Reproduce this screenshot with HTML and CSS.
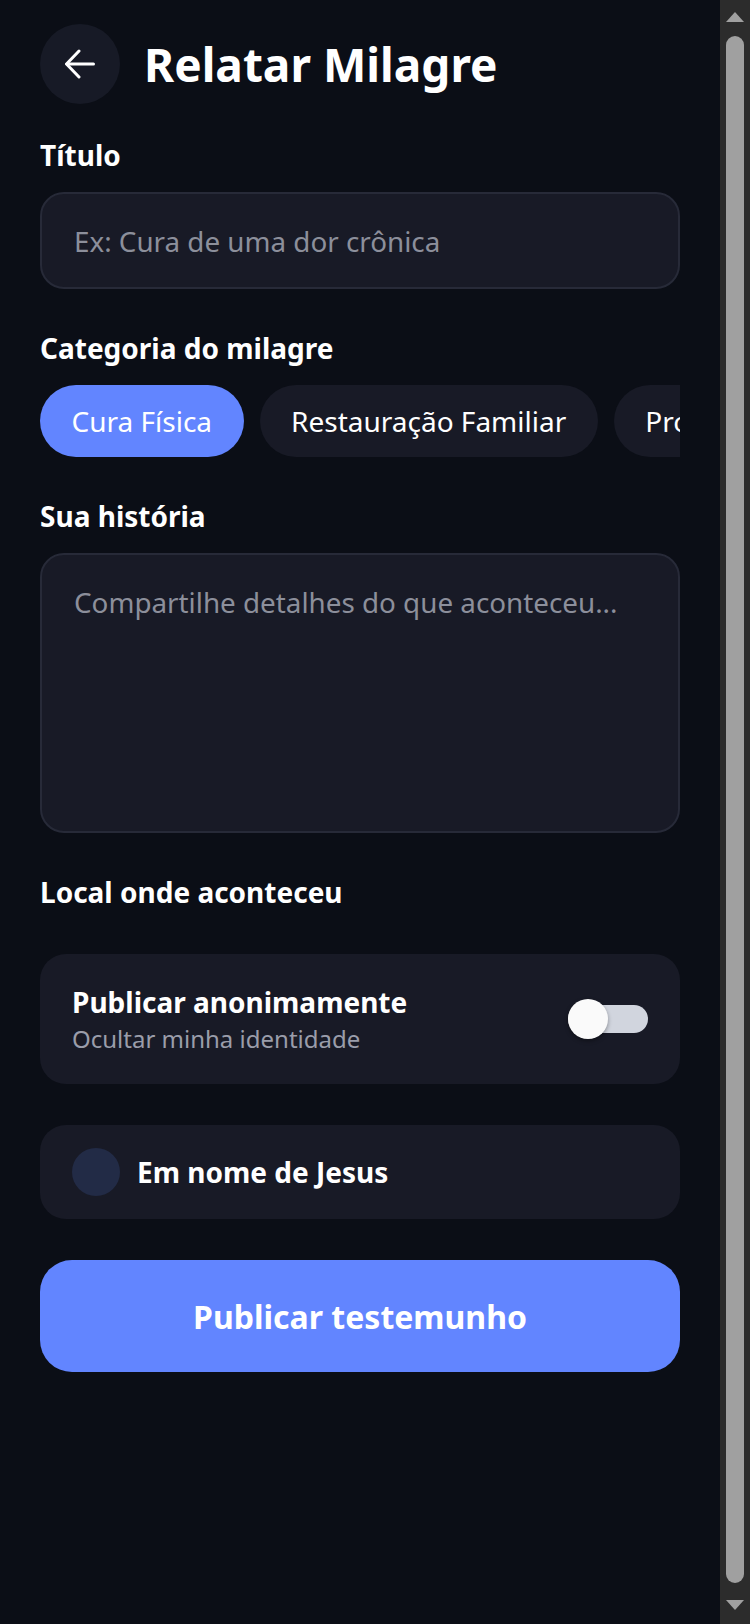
FILE: index.html
```html
<!DOCTYPE html>
<html>
<head>
    <title>Relatar Milagre</title>
    <link rel="stylesheet" href="styles.css">
</head>
<body>

    <div class="screen">
        <div class="header">
            <button class="back-button" aria-label="Voltar">
                <svg width="30" height="30" viewBox="0 0 30 30" fill="none" stroke="#ffffff" stroke-width="3" stroke-linecap="round" stroke-linejoin="round">
                    <path d="M2 15H28.5"/>
                    <path d="M14 2L1.5 15L14 28"/>
                </svg>
            </button>
            <h1 class="title">Relatar Milagre</h1>
        </div>

        <div class="field">
            <div class="label">Título</div>
            <input type="text" class="text-input" placeholder="Ex: Cura de uma dor crônica">
        </div>

        <div class="field">
            <div class="label">Categoria do milagre</div>
            <div class="chips">
                <button class="chip chip-active">Cura Física</button>
                <button class="chip">Restauração Familiar</button>
                <button class="chip">Provisão Financeira</button>
                <button class="chip">Libertação</button>
            </div>
        </div>

        <div class="field">
            <div class="label">Sua história</div>
            <textarea class="text-area" placeholder="Compartilhe detalhes do que aconteceu..."></textarea>
        </div>

        <div class="field field-local">
            <div class="label">Local onde aconteceu</div>
        </div>

        <div class="card card-switch">
            <div>
                <div class="card-title">Publicar anonimamente</div>
                <div class="card-sub">Ocultar minha identidade</div>
            </div>
            <div class="switch">
                <div class="switch-track"></div>
                <div class="switch-knob"></div>
            </div>
        </div>

        <div class="card card-amen">
            <div class="amen-dot"></div>
            <div class="card-title">Em nome de Jesus</div>
        </div>

        <button class="submit">Publicar testemunho</button>
    </div>

    <!-- window scrollbar, as the browser draws it -->
    <div class="scrollbar">
        <div class="sb-button"><div class="sb-up"></div></div>
        <div class="sb-thumb"></div>
        <div class="sb-button sb-button-end"><div class="sb-down"></div></div>
    </div>

</body>
</html>
```

FILE: styles.css
```css
html {
    background: #0b0e16;
}

body {
    margin: 0 30px 0 0;
    background: #0b0e16;
    color: #ffffff;
    font-family: "Noto Sans", "Open Sans", sans-serif;
}

.screen {
    padding: 24px 40px 40px;
}

.header {
    display: flex;
    align-items: center;
    gap: 24px;
    margin-bottom: 32px;
}

.back-button {
    width: 80px;
    height: 80px;
    border-radius: 50%;
    border: none;
    padding: 0;
    background: #171a26;
    display: flex;
    align-items: center;
    justify-content: center;
    cursor: pointer;
}

.title {
    margin: 0;
    font-size: 46px;
    font-weight: 700;
    line-height: 60px;
}

.field {
    margin-bottom: 40px;
}

.label {
    font-size: 28px;
    font-weight: 700;
    line-height: 38px;
    margin-bottom: 18px;
}

.field-local .label {
    margin-bottom: 0;
}

.field-local {
    margin-bottom: 43px;
}

.text-input,
.text-area {
    display: block;
    box-sizing: border-box;
    width: 100%;
    background: #181a26;
    border: 2px solid #272a38;
    border-radius: 24px;
    color: #ffffff;
    font-family: inherit;
    font-size: 27.8px;
    line-height: 38px;
    outline: none;
}

.text-input {
    height: 97px;
    padding: 0 32px;
}

.text-area {
    height: 280px;
    padding: 28px 32px;
    resize: none;
}

.text-input::placeholder,
.text-area::placeholder {
    color: #8c8f9b;
}

.chips {
    display: flex;
    gap: 16px;
    overflow: hidden;
}

.chip {
    flex-shrink: 0;
    height: 72px;
    padding: 0 31.5px;
    border: none;
    border-radius: 36px;
    background: #181a26;
    color: #ffffff;
    font-family: inherit;
    font-size: 28px;
    white-space: nowrap;
}

.chip-active {
    background: #6285ff;
}

.card {
    box-sizing: border-box;
    background: #181a26;
    border-radius: 26px;
    padding: 0 32px;
    display: flex;
    align-items: center;
    margin-bottom: 41px;
}

.card-switch {
    height: 130px;
    justify-content: space-between;
}

.card-title {
    font-size: 28px;
    font-weight: 700;
    line-height: 38px;
}

.card-sub {
    margin-top: 2px;
    font-size: 24px;
    line-height: 32px;
    color: #9a9daa;
}

.switch {
    position: relative;
    width: 80px;
    height: 40px;
}

.switch-track {
    position: absolute;
    left: 0;
    right: 0;
    top: 6px;
    height: 28px;
    border-radius: 14px;
    background: #d1d5de;
}

.switch-knob {
    position: absolute;
    left: 0;
    top: 0;
    width: 40px;
    height: 40px;
    border-radius: 50%;
    background: #fafafa;
    box-shadow: 0 2px 4px rgba(0, 0, 0, 0.35);
}

.card-amen {
    height: 94px;
    gap: 17px;
}

.amen-dot {
    width: 48px;
    height: 48px;
    border-radius: 50%;
    background: #222b46;
}

.submit {
    display: block;
    width: 100%;
    height: 112px;
    border: none;
    border-radius: 32px;
    background: #6285ff;
    color: #ffffff;
    font-family: inherit;
    font-size: 32px;
    font-weight: 700;
    cursor: pointer;
}

.scrollbar {
    position: fixed;
    top: 0;
    right: 0;
    bottom: 0;
    width: 30px;
    background: #2c2c2c;
    display: flex;
    flex-direction: column;
    align-items: center;
}

.sb-button {
    height: 30px;
    box-sizing: border-box;
    padding-top: 12px;
}

.sb-button-end {
    padding-top: 6px;
}

.sb-up {
    width: 0;
    height: 0;
    border-left: 9px solid transparent;
    border-right: 9px solid transparent;
    border-bottom: 10px solid #a0a0a0;
}

.sb-down {
    width: 0;
    height: 0;
    border-left: 9px solid transparent;
    border-right: 9px solid transparent;
    border-top: 10px solid #a0a0a0;
}

.sb-thumb {
    flex: 1;
    width: 18px;
    margin: 6px 0 11px;
    border-radius: 9px;
    background: #a0a0a0;
}
```
